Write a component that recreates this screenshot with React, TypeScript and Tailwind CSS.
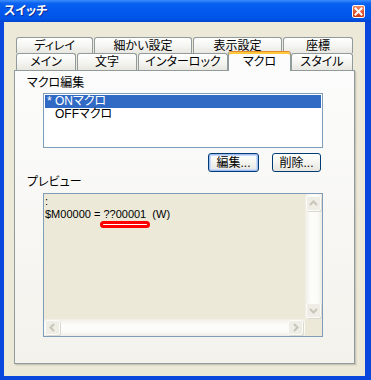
import clsx from "clsx";

const row1 = [
  { label: "ディレイ", w: "w-[77px]" },
  { label: "細かい設定", w: "w-[98px]" },
  { label: "表示設定", w: "w-[89px]" },
  { label: "座標", w: "w-[70px]" },
];

const row2 = [
  { label: "メイン", w: "w-[60px] mr-px" },
  { label: "文字", w: "w-[60px] mr-px" },
  { label: "インターロック", w: "w-[90px]" },
  { label: "マクロ", w: "w-[63px]", active: true },
  { label: "スタイル", w: "w-[62px]" },
];

function Tab({ label, w, h, active }: { label: string; w: string; h: string; active?: boolean }) {
  if (active) {
    return (
      <div
        className={clsx(
          "relative z-10 -mt-[2px] -mb-px h-[20px] flex items-center justify-center rounded-t-[3px]",
          "border-x border-t border-x-[#919b9c] border-t-[#e68b2c] bg-[#fcfcfc] shadow-[inset_0_2px_0_#ffc73c]",
          w
        )}
      >
        {label}
      </div>
    );
  }
  return (
    <div
      className={clsx(
        "flex items-center justify-center rounded-t-[3px] border border-b-0 border-[#919b9c]",
        "bg-[linear-gradient(to_bottom,#ffffff,#f3f3ef_60%,#e8e7e0)]",
        w,
        h
      )}
    >
      {label}
    </div>
  );
}

function ScrollBtn({ dir }: { dir: "up" | "down" | "left" | "right" }) {
  const pts = {
    up: "3,8 6.5,4.5 10,8",
    down: "3,5 6.5,8.5 10,5",
    left: "8,3 4.5,6.5 8,10",
    right: "5,3 8.5,6.5 5,10",
  }[dir];
  return (
    <div className="w-[15px] h-[15px] shrink-0 rounded-[2px] border border-[#fbfbf8] bg-[#eeede6] shadow-[1px_1px_0_#dcdad0] flex items-center justify-center">
      <svg width="13" height="13" viewBox="0 0 13 13">
        <polyline points={pts} fill="none" stroke="#c8c6b9" strokeWidth="2" />
      </svg>
    </div>
  );
}

function XpButton({ label, def, w }: { label: string; def?: boolean; w: string }) {
  return (
    <div
      className={clsx(
        "h-[19px] rounded-[3px] border border-[#003c74] flex items-center justify-center text-[12px] leading-none text-black",
        "bg-[linear-gradient(to_bottom,#ffffff,#f4f4f0_50%,#e6e5dd)]",
        def && "shadow-[inset_0_0_0_1px_#9fbcf2,inset_0_0_0_2px_#c9dafc]",
        w
      )}
    >
      {label}
    </div>
  );
}

export default function App() {
  return (
    <div className="w-[371px] h-[380px] flex flex-col font-['Liberation_Sans','Noto_Sans_CJK_JP',sans-serif] [font-feature-settings:'palt'] text-black select-none">
      {/* title bar */}
      <div className="h-[22px] shrink-0 flex items-center justify-between pl-[4px] pr-[6px] bg-[linear-gradient(to_bottom,#3d8ffe_0%,#0a62ef_15%,#0058ee_50%,#0054e6_85%,#0044d0_100%)]">
        <span className="text-white font-bold text-[12px] leading-none [text-shadow:1px_1px_0_#0f2a8f]">スイッチ</span>
        <div className="w-[13px] h-[13px] rounded-[2px] border border-white bg-[linear-gradient(to_bottom,#ee8a66,#e0502a_60%,#c83c18)] flex items-center justify-center">
          <svg width="9" height="9" viewBox="0 0 9 9">
            <path d="M1.5 1.5 L7.5 7.5 M7.5 1.5 L1.5 7.5" stroke="white" strokeWidth="2" strokeLinecap="square" />
          </svg>
        </div>
      </div>

      {/* body */}
      <div className="flex-1 bg-[#ece9d8] border-l-4 border-r-[6px] border-b-4 border-[#0a47dc] pl-[10px] pt-[15px]">
        {/* tabs */}
        <div className="ml-[2px] text-[12px] leading-none">
          <div className="flex gap-px">
            {row1.map((t) => (
              <Tab key={t.label} label={t.label} w={t.w} h="h-[16px]" />
            ))}
          </div>
          <div className="flex">
            {row2.map((t) => (
              <Tab key={t.label} label={t.label} w={t.w} h="h-[17px]" active={t.active} />
            ))}
          </div>
        </div>

        {/* panel */}
        <div className="w-[341px] h-[294px] border border-[#919b9c] bg-[linear-gradient(to_bottom,#fcfcfc,#f3f2ec)] shadow-[1px_1px_0_#c9c7ba,2px_2px_0_#dedbcb] pl-[12px] pt-[5px]">
          <div className="text-[12px] leading-[14px]">マクロ編集</div>

          <div className="ml-[16px] mt-[3px] w-[280px] h-[55px] border border-[#7f9db9] bg-white p-px text-[12px] leading-[13px]">
            <div className="h-[13px] bg-[#316ac5] text-white pl-[2px]">* ONマクロ</div>
            <div className="h-[13px] pl-[10px]">OFFマクロ</div>
          </div>

          <div className="ml-[16px] mt-[5px] w-[280px] flex justify-end gap-[13px] pr-[2px]">
            <XpButton label="編集..." def w="w-[51px]" />
            <XpButton label="削除..." w="w-[49px]" />
          </div>

          <div className="mt-[3px] text-[12px] leading-[14px]">プレビュー</div>

          <div className="ml-[16px] mt-[4px] w-[280px] h-[144px] border border-[#7f9db9] bg-[#ece9d8] flex flex-col">
            <div className="flex flex-1">
              <div className="flex-1 pl-px pt-px text-[11px] leading-[13px] whitespace-pre">
                <div>:</div>
                <div>
                  {"$M00000 = "}
                  <span className="relative">
                    ??00001
                    <span className="absolute left-[-3px] top-[13px] w-[50px] h-[7px] rounded-full border-[3px] border-[#ff0000] bg-white" />
                  </span>
                  {"  (W)"}
                </div>
              </div>
              <div className="w-[17px] flex flex-col justify-between pt-[2px] pb-px pl-px bg-[linear-gradient(to_right,#efede5,#fdfdfb_35%,#fbfbf8_75%,#eeece4)]">
                <ScrollBtn dir="up" />
                <ScrollBtn dir="down" />
              </div>
            </div>
            <div className="h-[17px] flex">
              <div className="flex-1 flex justify-between items-center pl-px pr-[2px] bg-[linear-gradient(to_bottom,#efede5,#fdfdfb_35%,#fbfbf8_75%,#eeece4)]">
                <ScrollBtn dir="left" />
                <ScrollBtn dir="right" />
              </div>
              <div className="w-[17px] bg-[#ece9d8]" />
            </div>
          </div>
        </div>
      </div>
    </div>
  );
}
